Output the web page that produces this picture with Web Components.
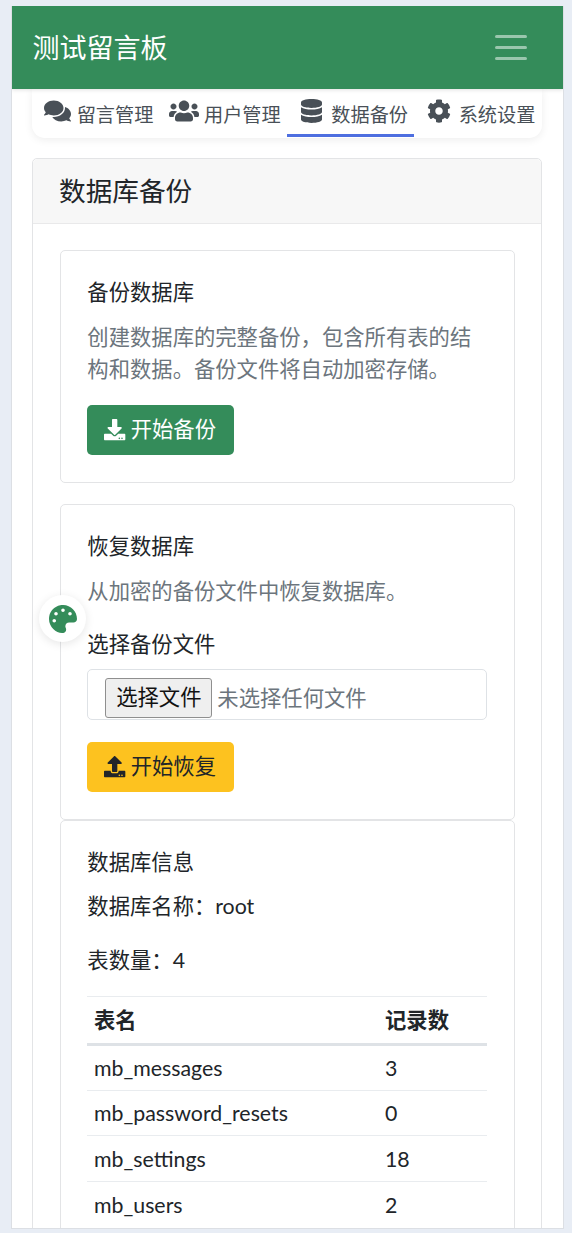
<!DOCTYPE html>
<html lang="zh-CN">
<head>
<meta charset="utf-8">
<title>测试留言板</title>
<style>
    html, body {
        margin: 0;
        height: 100%;
        overflow: hidden;
    }

    body {
        background: #e8edf5;
        color: #212529;
        font-family: Lato, "Noto Sans CJK SC", sans-serif;
        font-size: 21.33px;
        line-height: 1.5;
    }
</style>
</head>
<body>
<app-shell>
    <app-navbar title="测试留言板"></app-navbar>
    <tab-bar>
        <tab-item icon="comments">留言管理</tab-item>
        <tab-item icon="users">用户管理</tab-item>
        <tab-item icon="database" active>数据备份</tab-item>
        <tab-item icon="cog">系统设置</tab-item>
    </tab-bar>
    <panel-card title="数据库备份">
        <inner-card title="备份数据库">
            <muted-text style="margin-bottom: 20px">创建数据库的完整备份，包含所有表的结构和数据。备份文件将自动加密存储。</muted-text>
            <app-btn icon="download" kind="success">开始备份</app-btn>
        </inner-card>
        <inner-card title="恢复数据库">
            <muted-text style="margin-bottom: 21px">从加密的备份文件中恢复数据库。</muted-text>
            <file-field label="选择备份文件" button="选择文件" empty="未选择任何文件"></file-field>
            <app-btn icon="upload" kind="warning">开始恢复</app-btn>
        </inner-card>
        <inner-card title="数据库信息">
            <info-line style="margin-top: -1px">数据库名称：root</info-line>
            <info-line>表数量：4</info-line>
            <db-table head="表名,记录数" rows="mb_messages:3,mb_password_resets:0,mb_settings:18,mb_users:2"></db-table>
        </inner-card>
    </panel-card>
    <theme-fab></theme-fab>
</app-shell>

<script>
const ICONS = {
    comments: ['0 0 576 512', 'M416 192c0-88.4-93.1-160-208-160S0 103.6 0 192c0 34.3 14.1 65.9 38 92-13.4 30.2-35.5 54.2-35.8 54.5-2.2 2.3-2.8 5.7-1.5 8.7S4.8 352 8 352c36.6 0 66.9-12.3 88.7-25 32.2 15.7 70.3 25 111.3 25 114.9 0 208-71.6 208-160zm122 220c23.9-26 38-57.7 38-92 0-66.9-53.5-124.2-129.3-148.1.9 6.6 1.3 13.3 1.3 20.1 0 105.9-107.7 192-240 192-10.8 0-21.3-.8-31.7-1.9C207.8 439.6 281.8 480 368 480c41 0 79.1-9.2 111.3-25 21.8 12.7 52.1 25 88.7 25 3.2 0 6.1-1.9 7.3-4.8 1.3-2.9.7-6.3-1.5-8.7-.3-.3-22.4-24.2-35.8-54.5z'],
    users: ['0 0 640 512', 'M96 224c35.3 0 64-28.7 64-64s-28.7-64-64-64-64 28.7-64 64 28.7 64 64 64zm448 0c35.3 0 64-28.7 64-64s-28.7-64-64-64-64 28.7-64 64 28.7 64 64 64zm32 32h-64c-17.6 0-33.5 7.1-45.1 18.6 40.3 22.1 68.9 62 75.1 109.4h66c17.7 0 32-14.3 32-32v-32c0-35.3-28.7-64-64-64zm-256 0c61.9 0 112-50.1 112-112S381.9 32 320 32 208 82.1 208 144s50.1 112 112 112zm76.8 32h-8.3c-20.8 10-43.9 16-68.5 16s-47.6-6-68.5-16h-8.3C179.6 288 128 339.6 128 403.2V432c0 26.5 21.5 48 48 48h288c26.5 0 48-21.5 48-48v-28.8c0-63.6-51.6-115.2-115.2-115.2zm-223.7-13.4C161.5 263.1 145.6 256 128 256H64c-35.3 0-64 28.7-64 64v32c0 17.7 14.3 32 32 32h65.9c6.3-47.4 34.9-87.3 75.2-109.4z'],
    database: ['0 0 448 512', 'M448 73.143v45.714C448 159.143 347.667 192 224 192S0 159.143 0 118.857V73.143C0 32.857 100.333 0 224 0s224 32.857 224 73.143zM448 176v102.857C448 319.143 347.667 352 224 352S0 319.143 0 278.857V176c48.125 33.143 136.208 48.572 224 48.572S399.874 209.143 448 176zm0 160v102.857C448 479.143 347.667 512 224 512S0 479.143 0 438.857V336c48.125 33.143 136.208 48.572 224 48.572S399.874 369.143 448 336z'],
    cog: ['0 0 512 512', 'M487.4 315.7l-42.6-24.6c4.3-23.2 4.3-47 0-70.2l42.6-24.6c4.9-2.8 7.1-8.6 5.5-14-11.1-35.6-30-67.8-54.7-94.6-3.8-4.1-10-5.1-14.8-2.3L380.8 110c-17.9-15.4-38.5-27.3-60.8-35.1V25.8c0-5.6-3.9-10.5-9.4-11.7-36.7-8.2-74.3-7.8-109.2 0-5.5 1.2-9.4 6.1-9.4 11.7V75c-22.2 7.9-42.8 19.8-60.8 35.1L88.7 85.5c-4.9-2.8-11-1.9-14.8 2.3-24.7 26.7-43.6 58.9-54.7 94.6-1.7 5.4.6 11.2 5.5 14L67.3 221c-4.3 23.2-4.3 47 0 70.2l-42.6 24.6c-4.9 2.8-7.1 8.6-5.5 14 11.1 35.6 30 67.8 54.7 94.6 3.8 4.1 10 5.1 14.8 2.3l42.6-24.6c17.9 15.4 38.5 27.3 60.8 35.1v49.2c0 5.6 3.9 10.5 9.4 11.7 36.7 8.2 74.3 7.8 109.2 0 5.5-1.2 9.4-6.1 9.4-11.7v-49.2c22.2-7.9 42.8-19.8 60.8-35.1l42.6 24.6c4.9 2.8 11 1.9 14.8-2.3 24.7-26.7 43.6-58.9 54.7-94.6 1.5-5.5-.7-11.3-5.6-14.1zM256 336c-44.1 0-80-35.9-80-80s35.9-80 80-80 80 35.9 80 80-35.9 80-80 80z'],
    download: ['0 0 512 512', 'M216 0h80c13.3 0 24 10.7 24 24v168h87.7c17.8 0 26.7 21.5 14.1 34.1L269.7 378.3c-7.5 7.5-19.8 7.5-27.3 0L90.1 226.1c-12.6-12.6-3.7-34.1 14.1-34.1H192V24c0-13.3 10.7-24 24-24zm296 376v112c0 13.3-10.7 24-24 24H24c-13.3 0-24-10.7-24-24V376c0-13.3 10.7-24 24-24h146.7l49 49c20.1 20.1 52.5 20.1 72.6 0l49-49H488c13.3 0 24 10.7 24 24zm-124 88c0-11-9-20-20-20s-20 9-20 20 9 20 20 20 20-9 20-20zm64 0c0-11-9-20-20-20s-20 9-20 20 9 20 20 20 20-9 20-20z'],
    upload: ['0 0 512 512', 'M296 384h-80c-13.3 0-24-10.7-24-24V192h-87.7c-17.8 0-26.7-21.5-14.1-34.1L242.3 5.7c7.5-7.5 19.8-7.5 27.3 0l152.2 152.2c12.6 12.6 3.7 34.1-14.1 34.1H320v168c0 13.3-10.7 24-24 24zm216-8v112c0 13.3-10.7 24-24 24H24c-13.3 0-24-10.7-24-24V376c0-13.3 10.7-24 24-24h136v8c0 30.9 25.1 56 56 56h80c30.9 0 56-25.1 56-56v-8h136c13.3 0 24 10.7 24 24zm-124 88c0-11-9-20-20-20s-20 9-20 20 9 20 20 20 20-9 20-20zm64 0c0-11-9-20-20-20s-20 9-20 20 9 20 20 20 20-9 20-20z'],
    palette: ['0 0 512 512', 'M204.3 5C104.9 24.4 24.8 104.3 5.2 203.4c-37 187 131.7 326.4 258.8 306.7 41.2-6.4 61.4-54.6 42.5-91.7-23.1-45.4 9.9-98.4 60.9-98.4h79.7c35.8 0 64.8-29.6 64.9-65.3C511.5 97.1 368.1-26.9 204.3 5zM96 320c-17.7 0-32-14.3-32-32s14.3-32 32-32 32 14.3 32 32-14.3 32-32 32zm32-128c-17.7 0-32-14.3-32-32s14.3-32 32-32 32 14.3 32 32-14.3 32-32 32zm128-64c-17.7 0-32-14.3-32-32s14.3-32 32-32 32 14.3 32 32-14.3 32-32 32zm128 64c-17.7 0-32-14.3-32-32s14.3-32 32-32 32 14.3 32 32-14.3 32-32 32z']
};

function iconSvg(name, height) {
    const [box, d] = ICONS[name];
    return `<svg viewBox="${box}" height="${height}" fill="currentColor" aria-hidden="true"><path d="${d}"/></svg>`;
}

class AppShell extends HTMLElement {
    connectedCallback() {
        this.attachShadow({mode: 'open'});
        this.shadowRoot.innerHTML = `
            <style>
                :host {
                    display: block;
                    position: relative;
                    box-sizing: border-box;
                    width: 553px;
                    height: 1223px;
                    margin: 6px 0 0 11px;
                    background: #fff;
                    border: 1px solid #dcdfe4;
                    border-top: 0;
                    overflow: hidden;
                }
            </style>
            <slot></slot>
        `;
    }
}

class AppNavbar extends HTMLElement {
    connectedCallback() {
        this.attachShadow({mode: 'open'});
        this.shadowRoot.innerHTML = `
            <style>
                :host {
                    display: flex;
                    align-items: center;
                    justify-content: space-between;
                    height: 83px;
                    padding: 0 36.5px 0 20.5px;
                    background: #348c5a;
                    color: #fff;
                    box-shadow: 0 1px 4px rgba(0, 0, 0, .12);
                    position: relative;
                    z-index: 1;
                }
                .brand { font-size: 27px; line-height: 1.5; padding-top: 2px; }
                .toggler { display: flex; flex-direction: column; gap: 8.3px; width: 32px; }
                .toggler i { display: block; height: 2.7px; border-radius: 2px; background: rgba(255, 255, 255, .5); }
            </style>
            <span class="brand">${this.getAttribute('title')}</span>
            <span class="toggler"><i></i><i></i><i></i></span>
        `;
    }
}

class TabBar extends HTMLElement {
    connectedCallback() {
        this.attachShadow({mode: 'open'});
        this.shadowRoot.innerHTML = `
            <style>
                :host {
                    display: flex;
                    width: 510px;
                    height: 49px;
                    margin-left: 20px;
                    background: #fff;
                    border-radius: 0 0 13px 13px;
                    box-shadow: 0 2px 8px rgba(0, 0, 0, .07);
                }
            </style>
            <slot></slot>
        `;
    }
}

class TabItem extends HTMLElement {
    connectedCallback() {
        this.attachShadow({mode: 'open'});
        this.shadowRoot.innerHTML = `
            <style>
                :host {
                    display: flex;
                    align-items: center;
                    box-sizing: border-box;
                    width: 127.33px;
                    height: 48px;
                    padding: 8px 0 0 10px;
                    color: #495057;
                    font-size: 19.2px;
                    white-space: nowrap;
                    border-bottom: 3px solid transparent;
                }
                :host([active]) { border-bottom-color: #4e6fe0; }
                .icon { display: flex; justify-content: center; width: 30px; margin: -10px 4.67px 0 0; }
            </style>
            <span class="icon">${iconSvg(this.getAttribute('icon'), 24)}</span>
            <slot></slot>
        `;
    }
}

class PanelCard extends HTMLElement {
    connectedCallback() {
        this.attachShadow({mode: 'open'});
        this.shadowRoot.innerHTML = `
            <style>
                :host {
                    display: block;
                    box-sizing: border-box;
                    width: 510px;
                    margin: 20px 0 0 20px;
                    border: 1px solid #e3e4e6;
                    border-radius: 5px;
                    background: #fff;
                }
                header {
                    height: 64px;
                    padding-left: 26px;
                    background: #f7f7f7;
                    border-bottom: 1px solid #e9e9ea;
                    border-radius: 5px 5px 0 0;
                    font-size: 26.67px;
                    line-height: 64px;
                }
                .body { padding: 26px 26.33px 26.67px 26.67px; display: flex; flex-direction: column; }
                ::slotted(inner-card:nth-of-type(2)) { margin-top: 20.8px; }
            </style>
            <header>${this.getAttribute('title')}</header>
            <div class="body"><slot></slot></div>
        `;
    }
}

class InnerCard extends HTMLElement {
    connectedCallback() {
        this.attachShadow({mode: 'open'});
        this.shadowRoot.innerHTML = `
            <style>
                :host {
                    display: block;
                    box-sizing: border-box;
                    border: 1px solid #e3e4e6;
                    border-radius: 5px;
                    padding: 26px 26.67px 27.33px;
                    background: #fff;
                }
                h5 {
                    margin: 0 0 14px;
                    font-size: 21.33px;
                    font-weight: 400;
                    line-height: 30px;
                }
            </style>
            <h5>${this.getAttribute('title')}</h5>
            <slot></slot>
        `;
    }
}

class MutedText extends HTMLElement {
    connectedCallback() {
        this.attachShadow({mode: 'open'});
        this.shadowRoot.innerHTML = `
            <style>
                :host { display: block; color: #6c757d; line-height: 32px; }
            </style>
            <slot></slot>
        `;
    }
}

class AppBtn extends HTMLElement {
    connectedCallback() {
        this.attachShadow({mode: 'open'});
        this.shadowRoot.innerHTML = `
            <style>
                :host {
                    display: flex;
                    align-items: center;
                    gap: 5px;
                    box-sizing: border-box;
                    width: 147px;
                    height: 50px;
                    padding-left: 17px;
                    border-radius: 5px;
                }
                :host([kind="success"]) { background: #348c5a; color: #fff; }
                :host([kind="warning"]) { background: #fdc21f; color: #212529; }
                svg { display: block; }
            </style>
            ${iconSvg(this.getAttribute('icon'), 21.33)}
            <slot></slot>
        `;
    }
}

class FileField extends HTMLElement {
    connectedCallback() {
        this.attachShadow({mode: 'open'});
        this.shadowRoot.innerHTML = `
            <style>
                :host { display: block; margin-bottom: 22px; }
                label { display: block; line-height: 32px; margin-bottom: 9px; }
                .box {
                    display: flex;
                    align-items: flex-end;
                    gap: 5px;
                    box-sizing: border-box;
                    width: 400px;
                    height: 51px;
                    padding: 0 0 1px 17px;
                    border: 1px solid #dee2e6;
                    border-radius: 5px;
                    color: #6c757d;
                    white-space: nowrap;
                }
                button {
                    box-sizing: border-box;
                    width: 107px;
                    height: 40px;
                    padding: 0;
                    background: #efefef;
                    border: 1px solid #8f8f8f;
                    border-radius: 3px;
                    color: #111;
                    font: inherit;
                    line-height: 1;
                }
                span { line-height: 40px; }
            </style>
            <label>${this.getAttribute('label')}</label>
            <div class="box">
                <button type="button">${this.getAttribute('button')}</button>
                <span>${this.getAttribute('empty')}</span>
            </div>
        `;
    }
}

class InfoLine extends HTMLElement {
    connectedCallback() {
        this.attachShadow({mode: 'open'});
        this.shadowRoot.innerHTML = `
            <style>
                :host { display: block; line-height: 32px; margin-bottom: 22px; }
            </style>
            <slot></slot>
        `;
    }
}

class DbTable extends HTMLElement {
    connectedCallback() {
        this.attachShadow({mode: 'open'});
        const [col1, col2] = this.getAttribute('head').split(',');
        const rows = this.getAttribute('rows').split(',').map((row) => {
            const [name, count] = row.split(':');
            return `<tr><td>${name}</td><td>${count}</td></tr>`;
        }).join('');
        this.shadowRoot.innerHTML = `
            <style>
                :host { display: block; margin-top: -2.5px; }
                table { width: 400px; border-collapse: collapse; table-layout: fixed; }
                th, td {
                    box-sizing: border-box;
                    height: 45.67px;
                    padding: 0 6.67px;
                    text-align: left;
                    line-height: 32px;
                    border-top: 1.33px solid #e9ecef;
                }
                th { font-weight: 700; height: 48px; border-bottom: 3px solid #dee2e6; }
                th:first-child, td:first-child { width: 291px; }
            </style>
            <table>
                <thead><tr><th>${col1}</th><th>${col2}</th></tr></thead>
                <tbody>${rows}</tbody>
            </table>
        `;
    }
}

class ThemeFab extends HTMLElement {
    connectedCallback() {
        this.attachShadow({mode: 'open'});
        this.shadowRoot.innerHTML = `
            <style>
                :host {
                    position: absolute;
                    left: 27px;
                    top: 589px;
                    display: flex;
                    align-items: center;
                    justify-content: center;
                    width: 47px;
                    height: 47px;
                    border-radius: 50%;
                    background: #fff;
                    color: #348c5a;
                    box-shadow: 0 2px 10px rgba(0, 0, 0, .1);
                }
            </style>
            ${iconSvg('palette', 28)}
        `;
    }
}

customElements.define('app-shell', AppShell);
customElements.define('app-navbar', AppNavbar);
customElements.define('tab-bar', TabBar);
customElements.define('tab-item', TabItem);
customElements.define('panel-card', PanelCard);
customElements.define('inner-card', InnerCard);
customElements.define('muted-text', MutedText);
customElements.define('app-btn', AppBtn);
customElements.define('file-field', FileField);
customElements.define('info-line', InfoLine);
customElements.define('db-table', DbTable);
customElements.define('theme-fab', ThemeFab);
</script>
</body>
</html>
